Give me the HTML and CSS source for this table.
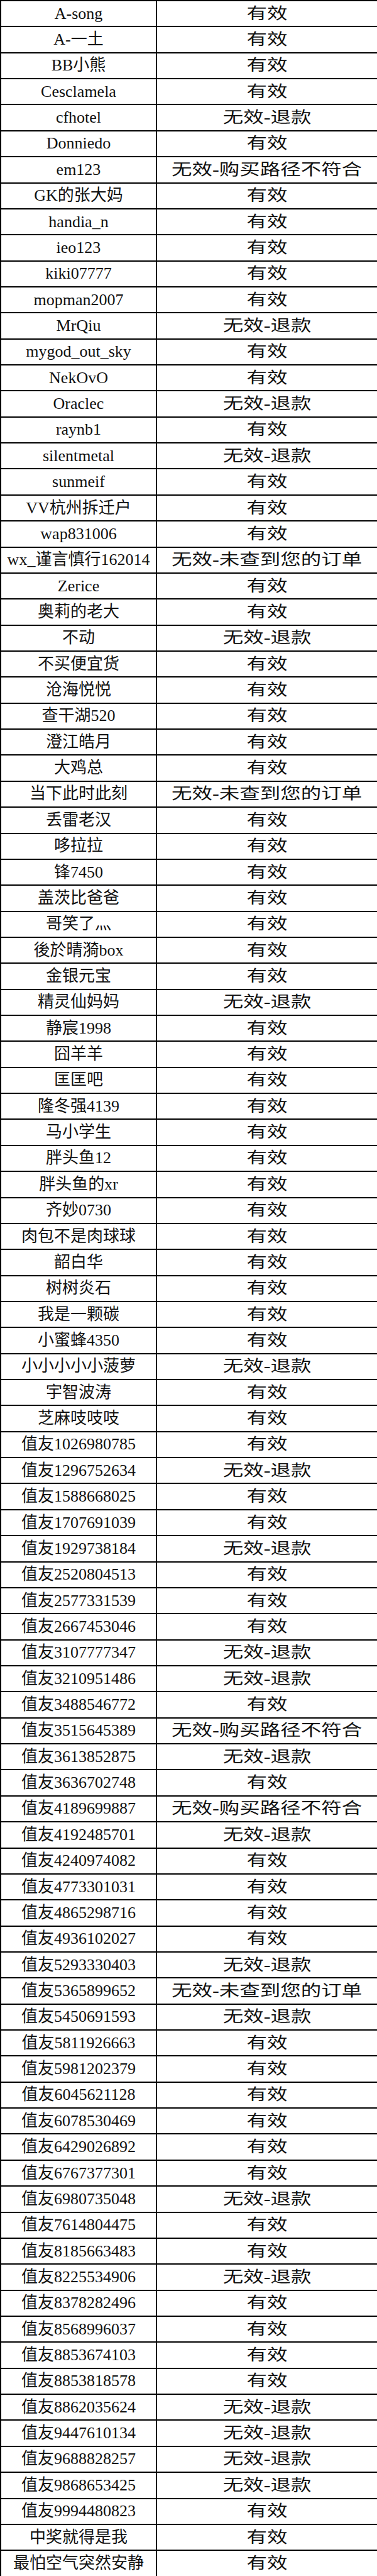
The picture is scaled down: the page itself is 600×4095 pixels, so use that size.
FILE: index.html
```html
<!DOCTYPE html>
<html lang="zh-CN">
<head>
<meta charset="utf-8">
<title>名单</title>
<link rel="stylesheet" href="styles.css">
</head>
<body>
<table class="list">
<colgroup><col class="c-name"><col class="c-status"></colgroup>
<tbody>
<tr><td>A-song</td><td><span class="st">有效</span></td></tr>
<tr><td>A-一土</td><td><span class="st">有效</span></td></tr>
<tr><td>BB小熊</td><td><span class="st">有效</span></td></tr>
<tr><td>Cesclamela</td><td><span class="st">有效</span></td></tr>
<tr><td>cfhotel</td><td><span class="st">无效-退款</span></td></tr>
<tr><td>Donniedo</td><td><span class="st">有效</span></td></tr>
<tr><td>em123</td><td><span class="st">无效-购买路径不符合</span></td></tr>
<tr><td>GK的张大妈</td><td><span class="st">有效</span></td></tr>
<tr><td>handia_n</td><td><span class="st">有效</span></td></tr>
<tr><td>ieo123</td><td><span class="st">有效</span></td></tr>
<tr><td>kiki07777</td><td><span class="st">有效</span></td></tr>
<tr><td>mopman2007</td><td><span class="st">有效</span></td></tr>
<tr><td>MrQiu</td><td><span class="st">无效-退款</span></td></tr>
<tr><td>mygod_out_sky</td><td><span class="st">有效</span></td></tr>
<tr><td>NekOvO</td><td><span class="st">有效</span></td></tr>
<tr><td>Oraclec</td><td><span class="st">无效-退款</span></td></tr>
<tr><td>raynb1</td><td><span class="st">有效</span></td></tr>
<tr><td>silentmetal</td><td><span class="st">无效-退款</span></td></tr>
<tr><td>sunmeif</td><td><span class="st">有效</span></td></tr>
<tr><td>VV杭州拆迁户</td><td><span class="st">有效</span></td></tr>
<tr><td>wap831006</td><td><span class="st">有效</span></td></tr>
<tr><td>wx_谨言慎行162014</td><td><span class="st">无效-未查到您的订单</span></td></tr>
<tr><td>Zerice</td><td><span class="st">有效</span></td></tr>
<tr><td>奥莉的老大</td><td><span class="st">有效</span></td></tr>
<tr><td>不动</td><td><span class="st">无效-退款</span></td></tr>
<tr><td>不买便宜货</td><td><span class="st">有效</span></td></tr>
<tr><td>沧海悦悦</td><td><span class="st">有效</span></td></tr>
<tr><td>查干湖520</td><td><span class="st">有效</span></td></tr>
<tr><td>澄江皓月</td><td><span class="st">有效</span></td></tr>
<tr><td>大鸡总</td><td><span class="st">有效</span></td></tr>
<tr><td>当下此时此刻</td><td><span class="st">无效-未查到您的订单</span></td></tr>
<tr><td>丢雷老汉</td><td><span class="st">有效</span></td></tr>
<tr><td>哆拉拉</td><td><span class="st">有效</span></td></tr>
<tr><td>锋7450</td><td><span class="st">有效</span></td></tr>
<tr><td>盖茨比爸爸</td><td><span class="st">有效</span></td></tr>
<tr><td>哥笑了灬</td><td><span class="st">有效</span></td></tr>
<tr><td>後於晴漪box</td><td><span class="st">有效</span></td></tr>
<tr><td>金银元宝</td><td><span class="st">有效</span></td></tr>
<tr><td>精灵仙妈妈</td><td><span class="st">无效-退款</span></td></tr>
<tr><td>静宸1998</td><td><span class="st">有效</span></td></tr>
<tr><td>囧羊羊</td><td><span class="st">有效</span></td></tr>
<tr><td>匡匡吧</td><td><span class="st">有效</span></td></tr>
<tr><td>隆冬强4139</td><td><span class="st">有效</span></td></tr>
<tr><td>马小学生</td><td><span class="st">有效</span></td></tr>
<tr><td>胖头鱼12</td><td><span class="st">有效</span></td></tr>
<tr><td>胖头鱼的xr</td><td><span class="st">有效</span></td></tr>
<tr><td>齐妙0730</td><td><span class="st">有效</span></td></tr>
<tr><td>肉包不是肉球球</td><td><span class="st">有效</span></td></tr>
<tr><td>韶白华</td><td><span class="st">有效</span></td></tr>
<tr><td>树树炎石</td><td><span class="st">有效</span></td></tr>
<tr><td>我是一颗碳</td><td><span class="st">有效</span></td></tr>
<tr><td>小蜜蜂4350</td><td><span class="st">有效</span></td></tr>
<tr><td>小小小小小菠萝</td><td><span class="st">无效-退款</span></td></tr>
<tr><td>宇智波涛</td><td><span class="st">有效</span></td></tr>
<tr><td>芝麻吱吱吱</td><td><span class="st">有效</span></td></tr>
<tr><td>值友1026980785</td><td><span class="st">有效</span></td></tr>
<tr><td>值友1296752634</td><td><span class="st">无效-退款</span></td></tr>
<tr><td>值友1588668025</td><td><span class="st">有效</span></td></tr>
<tr><td>值友1707691039</td><td><span class="st">有效</span></td></tr>
<tr><td>值友1929738184</td><td><span class="st">无效-退款</span></td></tr>
<tr><td>值友2520804513</td><td><span class="st">有效</span></td></tr>
<tr><td>值友2577331539</td><td><span class="st">有效</span></td></tr>
<tr><td>值友2667453046</td><td><span class="st">有效</span></td></tr>
<tr><td>值友3107777347</td><td><span class="st">无效-退款</span></td></tr>
<tr><td>值友3210951486</td><td><span class="st">无效-退款</span></td></tr>
<tr><td>值友3488546772</td><td><span class="st">有效</span></td></tr>
<tr><td>值友3515645389</td><td><span class="st">无效-购买路径不符合</span></td></tr>
<tr><td>值友3613852875</td><td><span class="st">无效-退款</span></td></tr>
<tr><td>值友3636702748</td><td><span class="st">有效</span></td></tr>
<tr><td>值友4189699887</td><td><span class="st">无效-购买路径不符合</span></td></tr>
<tr><td>值友4192485701</td><td><span class="st">无效-退款</span></td></tr>
<tr><td>值友4240974082</td><td><span class="st">有效</span></td></tr>
<tr><td>值友4773301031</td><td><span class="st">有效</span></td></tr>
<tr><td>值友4865298716</td><td><span class="st">有效</span></td></tr>
<tr><td>值友4936102027</td><td><span class="st">有效</span></td></tr>
<tr><td>值友5293330403</td><td><span class="st">无效-退款</span></td></tr>
<tr><td>值友5365899652</td><td><span class="st">无效-未查到您的订单</span></td></tr>
<tr><td>值友5450691593</td><td><span class="st">无效-退款</span></td></tr>
<tr><td>值友5811926663</td><td><span class="st">有效</span></td></tr>
<tr><td>值友5981202379</td><td><span class="st">有效</span></td></tr>
<tr><td>值友6045621128</td><td><span class="st">有效</span></td></tr>
<tr><td>值友6078530469</td><td><span class="st">有效</span></td></tr>
<tr><td>值友6429026892</td><td><span class="st">有效</span></td></tr>
<tr><td>值友6767377301</td><td><span class="st">有效</span></td></tr>
<tr><td>值友6980735048</td><td><span class="st">无效-退款</span></td></tr>
<tr><td>值友7614804475</td><td><span class="st">有效</span></td></tr>
<tr><td>值友8185663483</td><td><span class="st">有效</span></td></tr>
<tr><td>值友8225534906</td><td><span class="st">无效-退款</span></td></tr>
<tr><td>值友8378282496</td><td><span class="st">有效</span></td></tr>
<tr><td>值友8568996037</td><td><span class="st">有效</span></td></tr>
<tr><td>值友8853674103</td><td><span class="st">有效</span></td></tr>
<tr><td>值友8853818578</td><td><span class="st">有效</span></td></tr>
<tr><td>值友8862035624</td><td><span class="st">无效-退款</span></td></tr>
<tr><td>值友9447610134</td><td><span class="st">无效-退款</span></td></tr>
<tr><td>值友9688828257</td><td><span class="st">无效-退款</span></td></tr>
<tr><td>值友9868653425</td><td><span class="st">无效-退款</span></td></tr>
<tr><td>值友9994480823</td><td><span class="st">有效</span></td></tr>
<tr><td>中奖就得是我</td><td><span class="st">有效</span></td></tr>
<tr><td>最怕空气突然安静</td><td><span class="st">有效</span></td></tr>
</tbody>
</table>
</body>
</html>
```

FILE: styles.css
```css
html, body {
  margin: 0;
  padding: 0;
  background: #fff;
}

.list {
  width: 600px;
  border-collapse: collapse;
  table-layout: fixed;
  font-family: "Liberation Serif", "Noto Sans CJK SC", serif;
  font-size: 26px;
  color: #111;
}

.c-name { width: 248px; }
.c-status { width: 352px; }

.list tr {
  height: 41.36px;
}

.list td {
  border: 2px solid #000;
  padding: 0;
  text-align: center;
  vertical-align: middle;
  line-height: 1;
  white-space: nowrap;
  overflow: hidden;
}

.st {
  display: inline-block;
  font-size: 25px;
  transform: scaleX(1.3);
}
```
